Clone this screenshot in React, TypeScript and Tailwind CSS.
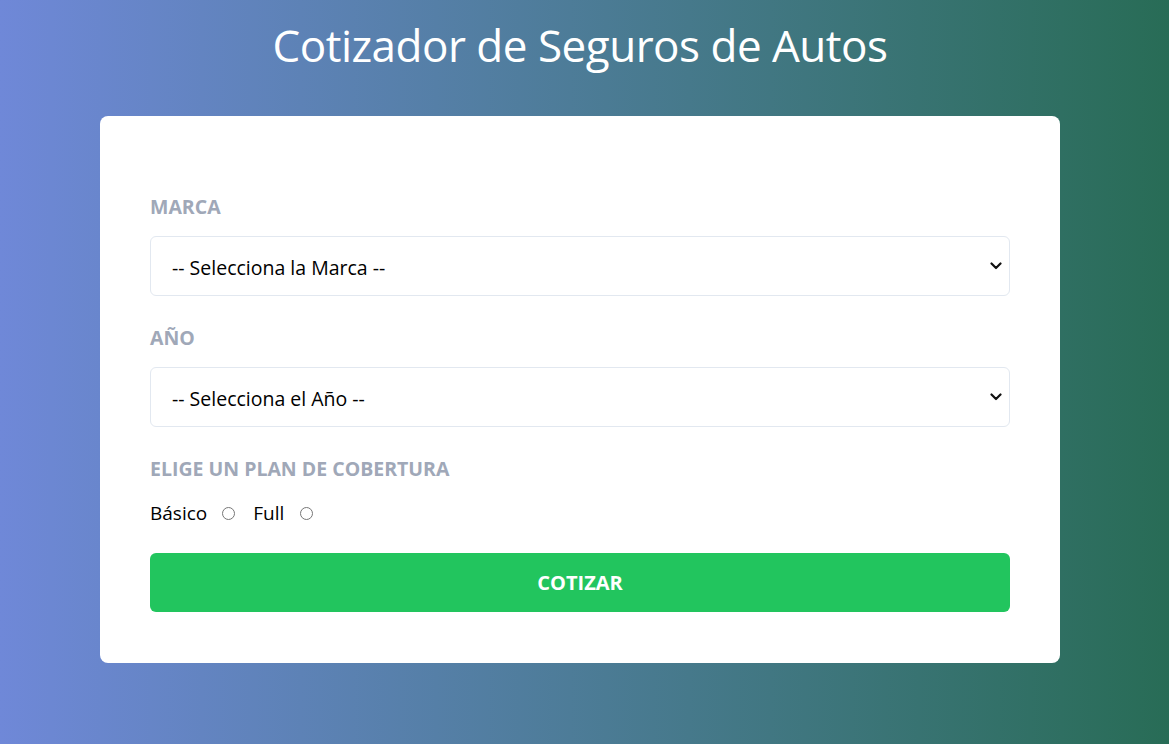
import React from "react";

function Chevron() {
  return (
    <svg className="pointer-events-none absolute right-[8px] top-1/2 -translate-y-1/2" width="12" height="8" viewBox="0 0 12 8" fill="none">
      <path d="M1.5 1.5 L6 6 L10.5 1.5" stroke="#111" strokeWidth="2.2" strokeLinecap="round" strokeLinejoin="round" />
    </svg>
  );
}

export default function App() {
  return (
    <div
      className="min-h-screen w-full bg-linear-to-r from-[#6f88d8] to-[#286c56] flex flex-col items-center pr-[9px]"
      style={{ fontFamily: '"Open Sans", "Noto Sans", sans-serif' }}
    >
      <h1 className="pt-[21px] text-[44px] leading-[48px] font-normal text-white tracking-[-0.5px]">
        Cotizador de Seguros de Autos
      </h1>
      <div className="mt-[47px] w-[960px] h-[547px] bg-white rounded-lg px-[50px] pt-[77px]">
        <div>
          <label className="block text-[19.5px] leading-[28px] font-bold text-[#a0a8b8] uppercase">Marca</label>
          <div className="relative mt-[15px]">
            <select className="block w-full h-[60px] appearance-none border border-[#e2e8f0] rounded-md pl-[21px] pt-[3px] text-[19.5px] text-black bg-white outline-none">
              <option>-- Selecciona la Marca --</option>
            </select>
            <Chevron />
          </div>
        </div>
        <div className="mt-[28px]">
          <label className="block text-[19.5px] leading-[28px] font-bold text-[#a0a8b8] uppercase">Año</label>
          <div className="relative mt-[15px]">
            <select className="block w-full h-[60px] appearance-none border border-[#e2e8f0] rounded-md pl-[21px] pt-[3px] text-[19.5px] text-black bg-white outline-none">
              <option>-- Selecciona el Año --</option>
            </select>
            <Chevron />
          </div>
        </div>
        <div className="mt-[28px]">
          <label className="block text-[19.5px] leading-[28px] font-bold text-[#a0a8b8] uppercase">Elige un plan de cobertura</label>
          <div className="mt-[16px] flex items-center h-[28px] text-[19px] text-black">
            <span>Básico</span>
            <input type="radio" name="plan" className="ml-[15px] mr-[18px] w-[13px] h-[13px]" />
            <span>Full</span>
            <input type="radio" name="plan" className="ml-[16px] w-[13px] h-[13px]" />
          </div>
        </div>
        <button className="mt-[26px] w-full h-[59px] bg-[#22c55e] rounded-md text-white font-bold text-[20px] uppercase">
          Cotizar
        </button>
      </div>
    </div>
  );
}
